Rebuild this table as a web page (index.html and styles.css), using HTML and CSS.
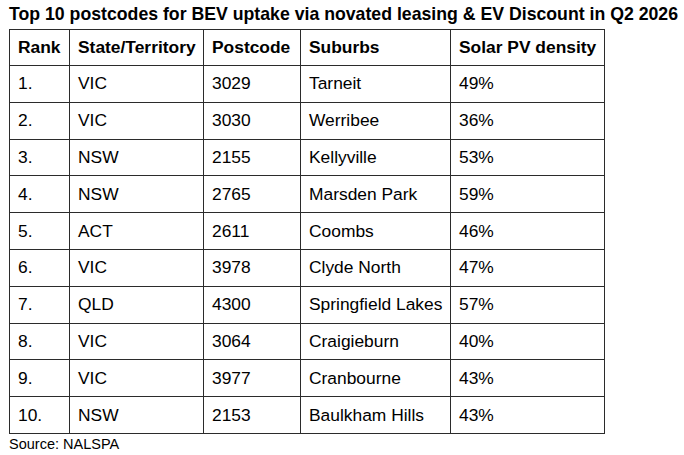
FILE: index.html
```html
<!DOCTYPE html>
<html>
<head>
<meta charset="utf-8">
<link rel="stylesheet" href="styles.css">
</head>
<body>
<div class="wrap">
  <h1 class="title">Top 10 postcodes for BEV uptake via novated leasing &amp; EV Discount in Q2 2026</h1>
  <table class="data">
    <colgroup>
      <col class="c1"><col class="c2"><col class="c3"><col class="c4"><col class="c5">
    </colgroup>
    <thead>
      <tr><th>Rank</th><th>State/Territory</th><th>Postcode</th><th>Suburbs</th><th>Solar PV density</th></tr>
    </thead>
    <tbody>
      <tr><td>1.</td><td>VIC</td><td>3029</td><td>Tarneit</td><td>49%</td></tr>
      <tr><td>2.</td><td>VIC</td><td>3030</td><td>Werribee</td><td>36%</td></tr>
      <tr><td>3.</td><td>NSW</td><td>2155</td><td>Kellyville</td><td>53%</td></tr>
      <tr><td>4.</td><td>NSW</td><td>2765</td><td>Marsden Park</td><td>59%</td></tr>
      <tr><td>5.</td><td>ACT</td><td>2611</td><td>Coombs</td><td>46%</td></tr>
      <tr><td>6.</td><td>VIC</td><td>3978</td><td>Clyde North</td><td>47%</td></tr>
      <tr><td>7.</td><td>QLD</td><td>4300</td><td>Springfield Lakes</td><td>57%</td></tr>
      <tr><td>8.</td><td>VIC</td><td>3064</td><td>Craigieburn</td><td>40%</td></tr>
      <tr><td>9.</td><td>VIC</td><td>3977</td><td>Cranbourne</td><td>43%</td></tr>
      <tr><td>10.</td><td>NSW</td><td>2153</td><td>Baulkham Hills</td><td>43%</td></tr>
    </tbody>
  </table>
  <p class="source">Source: NALSPA</p>
</div>
</body>
</html>
```
FILE: styles.css
```css
html, body {
  margin: 0;
  padding: 0;
  background: #ffffff;
}
body {
  font-family: "Liberation Sans", Arial, sans-serif;
  color: #000000;
}
.wrap {
  padding: 3px 0 0 9px;
}
.title {
  margin: 0;
  font-size: 17.7px;
  font-weight: bold;
  line-height: 22px;
  height: 26px;
  white-space: nowrap;
}
.data {
  border-collapse: collapse;
  table-layout: fixed;
  width: 595px;
}
.c1 { width: 60px; }
.c2 { width: 134px; }
.c3 { width: 97px; }
.c4 { width: 150px; }
.c5 { width: 154px; }
.data th,
.data td {
  border: 1px solid #2b2b2b;
  padding: 0 0 0 8px;
  text-align: left;
  font-size: 17.4px;
  white-space: nowrap;
  overflow: hidden;
}
.data th {
  height: 35px;
  font-weight: bold;
}
.data td {
  height: 35.8px;
}
.source {
  margin: 2px 0 0 0;
  font-size: 14.5px;
  line-height: 17px;
}
```
